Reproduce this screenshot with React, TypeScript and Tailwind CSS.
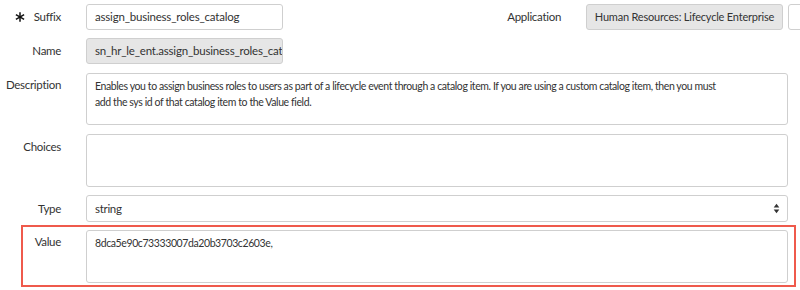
import React from "react";

const font = { fontFamily: "Lato, 'Liberation Sans', sans-serif", letterSpacing: "-0.3px" };

function Star() {
  return (
    <svg width="10" height="10" viewBox="0 0 10 10" className="mr-[9px]">
      <g stroke="#111" strokeWidth="1.5">
        <line x1="5" y1="0.3" x2="5" y2="9.7" />
        <line x1="0.9" y1="2.6" x2="9.1" y2="7.4" />
        <line x1="0.9" y1="7.4" x2="9.1" y2="2.6" />
      </g>
    </svg>
  );
}

export default function App() {
  return (
    <div className="w-[800px] h-[290px] overflow-hidden bg-white pt-[4px] text-[11.5px] text-[#333]" style={font}>
      {/* Row 1 */}
      <div className="flex h-[26px] items-stretch">
        <div className="w-[86px] shrink-0 flex justify-end items-center pr-[25px]">
          <Star />
          <span>Suffix</span>
        </div>
        <div className="w-[197px] shrink-0 border border-[#cfcfcf] rounded-[3px] px-[8px] flex items-center bg-white tracking-[-0.2px]">
          assign_business_roles_catalog
        </div>
        <div className="flex-1 flex justify-end items-center pr-[25px]">Application</div>
        <div className="w-[197px] shrink-0 border border-[#cfcfcf] rounded-[3px] bg-[#e6e6e6] flex items-center justify-center whitespace-nowrap text-[11px] tracking-[-0.2px]">
          Human Resources: Lifecycle Enterprise
        </div>
        <div className="w-[20px] shrink-0 ml-[5px] -mr-[8px] border border-[#cfcfcf] rounded-[3px] bg-white" />
      </div>

      {/* Name */}
      <div className="flex h-[26px] mt-[8px]">
        <div className="w-[86px] shrink-0 flex justify-end items-center pr-[25px]">Name</div>
        <div className="w-[197px] shrink-0 overflow-hidden whitespace-nowrap border border-[#cfcfcf] rounded-[3px] bg-[#e6e6e6] px-[8px] flex items-center tracking-[-0.2px]">
          sn_hr_le_ent.assign_business_roles_catalog
        </div>
      </div>

      {/* Description */}
      <div className="flex mt-[9px]">
        <div className="w-[86px] shrink-0 flex justify-end pr-[25px] pt-[4px] leading-[16px] whitespace-nowrap">Description</div>
        <div className="w-[702px] h-[52px] shrink-0 border border-[#cfcfcf] rounded-[3px] px-[8px] pt-[4px] leading-[16px] text-[10.5px] tracking-[-0.4px] whitespace-nowrap">
          Enables you to assign business roles to users as part of a lifecycle event through a catalog item. If you are using a custom catalog item, then you must
          <br />
          add the sys id of that catalog item to the Value field.
        </div>
      </div>

      {/* Choices */}
      <div className="flex mt-[9px]">
        <div className="w-[86px] shrink-0 flex justify-end pr-[25px] pt-[5px] leading-[16px]">Choices</div>
        <div className="w-[702px] h-[53px] shrink-0 border border-[#cfcfcf] rounded-[3px]" />
      </div>

      {/* Type */}
      <div className="flex h-[27px] mt-[8px]">
        <div className="w-[86px] shrink-0 flex justify-end items-center pr-[25px]">Type</div>
        <div className="w-[702px] shrink-0 border border-[#cfcfcf] rounded-[3px] px-[8px] flex items-center justify-between">
          <span>string</span>
          <svg width="7" height="11" viewBox="0 0 7 11" className="mr-[-1px]">
            <path d="M3.5 0.8 L6.3 4.4 L0.7 4.4 Z" fill="#333" />
            <path d="M3.5 10.2 L6.3 6.6 L0.7 6.6 Z" fill="#333" />
          </svg>
        </div>
      </div>

      {/* Value highlighted */}
      <div className="mt-[3px] ml-[21px] w-[775px] h-[62px] border-2 border-[#ef5a4c] flex pt-[3px]">
        <div className="w-[63px] shrink-0 flex justify-end pr-[25px] pt-[4px] leading-[16px]">Value</div>
        <div className="w-[702px] h-[53px] shrink-0 border border-[#cfcfcf] rounded-[3px] px-[8px] pt-[4px] leading-[16px] text-[10.5px] tracking-[-0.4px]">
          8dca5e90c73333007da20b3703c2603e,
        </div>
      </div>
    </div>
  );
}
